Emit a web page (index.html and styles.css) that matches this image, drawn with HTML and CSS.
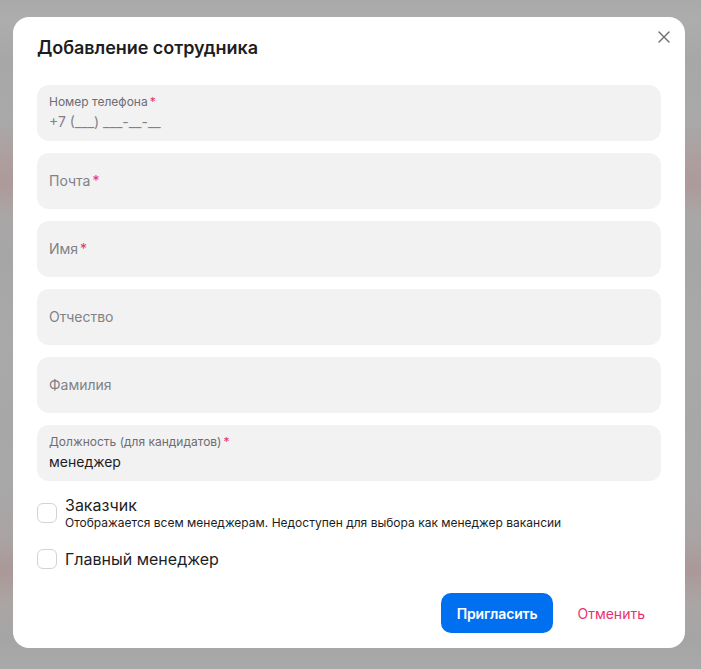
FILE: index.html
```html
<!DOCTYPE html>
<html lang="ru">
<head>
<meta charset="utf-8">
<link rel="stylesheet" href="styles.css">
</head>
<body>
<div class="backdrop">
  <div class="modal">
    <button class="close" aria-label="Закрыть">
      <svg width="12" height="12" viewBox="0 0 12 12"><path d="M1 1L11 11M11 1L1 11" stroke="#6b6b70" stroke-width="1.4" stroke-linecap="round"/></svg>
    </button>
    <h1 class="title">Добавление сотрудника</h1>
    <div class="fields">
      <div class="field filled">
        <div class="label">Номер телефона<span class="req">*</span></div>
        <div class="value muted">+7 (___) ___-__-__</div>
      </div>
      <div class="field"><div class="placeholder">Почта<span class="req">*</span></div></div>
      <div class="field"><div class="placeholder">Имя<span class="req">*</span></div></div>
      <div class="field"><div class="placeholder">Отчество</div></div>
      <div class="field"><div class="placeholder">Фамилия</div></div>
      <div class="field filled">
        <div class="label">Должность (для кандидатов)<span class="req">*</span></div>
        <div class="value">менеджер</div>
      </div>
    </div>
    <div class="checks">
      <label class="check">
        <span class="box"></span>
        <span class="check-text">
          <span class="check-title">Заказчик</span>
          <span class="check-sub">Отображается всем менеджерам. Недоступен для выбора как менеджер вакансии</span>
        </span>
      </label>
      <label class="check single">
        <span class="box"></span>
        <span class="check-text"><span class="check-title">Главный менеджер</span></span>
      </label>
    </div>
    <div class="actions">
      <button class="btn primary">Пригласить</button>
      <button class="btn link">Отменить</button>
    </div>
  </div>
</div>
</body>
</html>
```
FILE: styles.css
```css
* { box-sizing: border-box; }
html, body { margin: 0; padding: 0; }
body {
  width: 701px;
  height: 669px;
  overflow: hidden;
  font-family: Inter, "Noto Sans", sans-serif;
  background: linear-gradient(180deg,
    #a9a9a9 0px, #adadad 20px, #a7a7a7 60px, #a9a9a9 120px,
    #ae9e9e 160px, #ad9a9a 185px, #aaa6a6 215px, #a6a6a6 260px,
    #a9a9a9 340px, #a7a7a7 420px, #a8a8a8 480px,
    #aaa3a3 540px, #ab9898 570px, #aba5a5 605px, #a5a5a5 640px, #a9a9a9 669px);
}
.backdrop {
  padding: 17px 0 0 13px;
}
.modal {
  position: relative;
  width: 672px;
  height: 631px;
  background: #fff;
  border-radius: 16px;
  padding: 20px 24px 0 24px;
  display: flex;
  flex-direction: column;
}
.close {
  position: absolute;
  top: 14px;
  right: 15px;
  width: 12px;
  height: 12px;
  padding: 0;
  border: 0;
  background: none;
  display: flex;
}
.title {
  margin: 0;
  font-size: 18px;
  line-height: 22px;
  font-weight: 600;
  color: #1d1d1f;
  letter-spacing: -0.05px;
}
.fields {
  margin-top: 26px;
  display: flex;
  flex-direction: column;
  gap: 12px;
}
.field {
  height: 56px;
  border-radius: 12px;
  background: #f2f2f3;
  padding: 0 12px;
  display: flex;
  flex-direction: column;
  justify-content: center;
}
.field.filled { padding-bottom: 2px; }
.label {
  font-size: 12px;
  line-height: 15px;
  color: #6d6d72;
}
.value {
  margin-top: 4px;
  font-size: 14px;
  line-height: 18px;
  color: #1d1d1f;
}
.value.muted { color: #818186; }
.placeholder {
  font-size: 14px;
  line-height: 18px;
  color: #818186;
}
.req {
  color: #ee2e6d;
  margin-left: 2px;
}
.checks {
  margin-top: 14px;
  display: flex;
  flex-direction: column;
  gap: 18px;
}
.check {
  display: flex;
  align-items: center;
  gap: 8px;
}
.box {
  width: 20px;
  height: 20px;
  border: 1.5px solid #d3d3d6;
  border-radius: 6px;
  flex-shrink: 0;
}
.check-text {
  display: flex;
  flex-direction: column;
}
.check-title {
  font-size: 16px;
  line-height: 20px;
  color: #1d1d1f;
}
.check-sub {
  font-size: 12px;
  line-height: 16px;
  color: #1d1d1f;
}
.actions {
  margin-top: auto;
  margin-bottom: 15px;
  display: flex;
  justify-content: flex-end;
  align-items: center;
  gap: 7px;
}
.btn {
  font-family: inherit;
  font-size: 14px;
  font-weight: 500;
  border: 0;
  cursor: pointer;
}
.btn.primary {
  height: 40px;
  padding: 0 16px;
  border-radius: 10px;
  background: #0070f0;
  color: #fff;
  font-weight: 600;
  letter-spacing: -0.15px;
}
.btn.link {
  height: 40px;
  padding: 0 16px 0 17px;
  background: none;
  color: #ee2e6d;
  font-weight: 400;
}
```
